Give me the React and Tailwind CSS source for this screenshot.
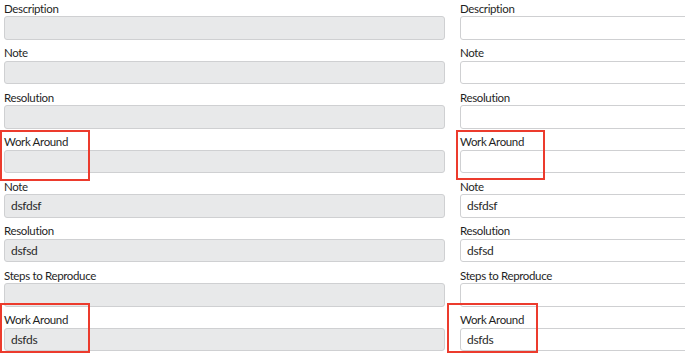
const rows = [
  { label: "Description", value: "" },
  { label: "Note", value: "" },
  { label: "Resolution", value: "" },
  { label: "Work Around", value: "", marked: "top" },
  { label: "Note", value: "dsfdsf" },
  { label: "Resolution", value: "dsfsd" },
  { label: "Steps to Reproduce", value: "" },
  { label: "Work Around", value: "dsfds", marked: "bottom" },
];

// red annotation frames, placed relative to their field row
const leftMarks = {
  top: "left-[-4px] top-[-4px] h-[51px] w-[90px]",
  bottom: "left-[-4px] top-[-9px] h-[50px] w-[90px]",
};
const rightMarks = {
  top: "left-[-4px] top-[-4px] h-[50px] w-[89px]",
  bottom: "left-[-13px] top-[-9px] h-[50px] w-[91px]",
};

const Field = ({ label, value, readOnly, mark }) => (
  <div className="relative h-[44.57px]">
    <div className="h-[15.5px] text-[11.5px] leading-[15px] tracking-[-0.35px] text-[#1f1f1f]">
      {label}
    </div>
    <div
      className={
        readOnly
          ? "h-[23.5px] rounded-[3px] border border-[#cfd0d2] bg-[#e8e9ea] pl-[6px] text-[12px] leading-[21.5px] tracking-[-0.3px] text-[#2a2a2a]"
          : "h-[23.5px] rounded-[3px] border border-[#cfd0d2] bg-white pl-[6px] text-[12px] leading-[21.5px] tracking-[-0.3px] text-[#2a2a2a]"
      }
    >
      {value}
    </div>
    {mark && (
      <div className={`pointer-events-none absolute border-2 border-[#ec3b2d] ${mark}`} />
    )}
  </div>
);

export default function App() {
  return (
    <div
      className="h-[357px] w-full overflow-hidden bg-white"
      style={{ fontFamily: "Lato, 'Open Sans', sans-serif" }}
    >
      <div className="grid w-[905px] grid-cols-[441px_441px] gap-x-[15px] pl-[4px] pt-[0.5px]">
        <div>
          {rows.map((r, i) => (
            <Field
              key={i}
              label={r.label}
              value={r.value}
              readOnly
              mark={r.marked ? leftMarks[r.marked] : ""}
            />
          ))}
        </div>
        <div>
          {rows.map((r, i) => (
            <Field
              key={i}
              label={r.label}
              value={r.value}
              mark={r.marked ? rightMarks[r.marked] : ""}
            />
          ))}
        </div>
      </div>
    </div>
  );
}
